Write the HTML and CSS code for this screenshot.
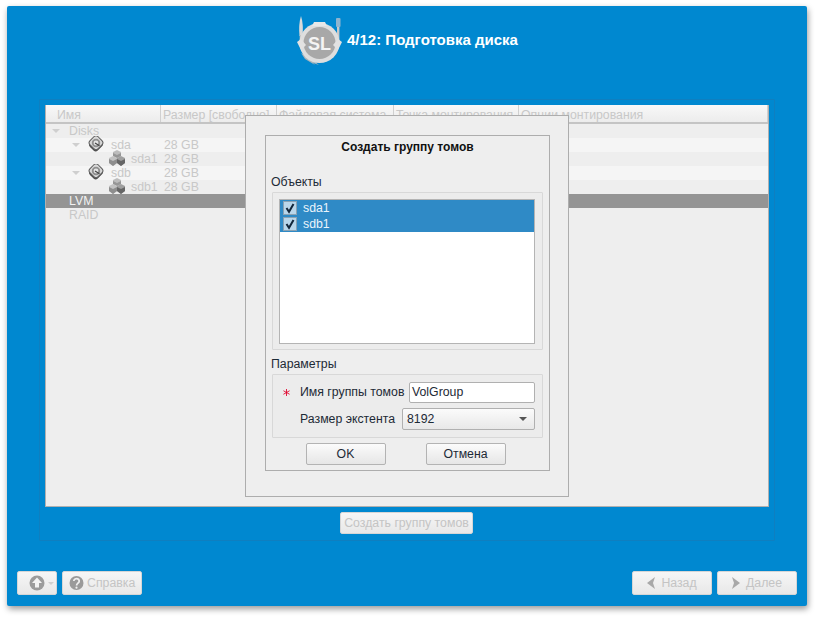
FILE: index.html
```html
<!DOCTYPE html>
<html lang="ru">
<head>
<meta charset="utf-8">
<title>Подготовка диска</title>
<link rel="stylesheet" href="styles.css">
</head>
<body>
<svg class="defs" width="0" height="0" aria-hidden="true">
  <defs>
    <symbol id="disk" viewBox="0 0 16 16">
      <rect x="2.500" y="2.500" width="11" height="12" rx="3" transform="rotate(45 8 8.500)" fill="#4f4f4f"/>
      <rect x="2.300" y="1" width="11.400" height="11.400" rx="3" transform="rotate(45 8 6.700)" fill="#d8d8d8" stroke="#5c5c5c" stroke-width="1"/>
      <circle cx="8" cy="7" r="4.200" fill="#8f8f8f"/>
      <circle cx="8" cy="7" r="2.400" fill="#e4e4e4"/>
      <path d="M7 7 11.500 9.800" stroke="#444" stroke-width="1.200"/>
    </symbol>
    <symbol id="cubes" viewBox="0 0 16 16">
      <path d="M8 0 12 2v4L8 8 4 6V2z" fill="#bcbcbc"/>
      <path d="M4 3l4 2 4-2v3L8 8 4 6z" fill="#969696"/>
      <path d="M4 6l4 2v5l-4 3-4-3V8z" fill="#c2c2c2"/>
      <path d="M0 9l4 2 4-2v4l-4 3-4-3z" fill="#8e8e8e"/>
      <path d="M12 6l4 2v5l-4 3-4-3V8z" fill="#a0a0a0"/>
      <path d="M8 9l4 2 4-2v4l-4 3-4-3z" fill="#666"/>
    </symbol>
    <symbol id="check" viewBox="0 0 14 14">
      <rect x=".5" y=".5" width="13" height="13" fill="#b9d6ea" stroke="#8aa2b3"/>
      <path d="M3.500 7 6 10.800 10.500 3" fill="none" stroke="#12263a" stroke-width="2"/>
    </symbol>
  </defs>
</svg>
<main class="window">
  <header class="head">
    <svg class="logo" width="48" height="52" viewBox="0 0 48 52" aria-hidden="true">
      <path d="M5 1C3 7 2.800 14 3.500 21H6.500C7.200 14 7 7 5 1z" fill="#dadada"/>
      <rect x="3.700" y="20" width="2.600" height="8" fill="#c4c4c4"/>
      <rect x="40" y="3" width="4.500" height="9" rx="1" fill="#8fb4cf"/>
      <rect x="41" y="12" width="2.400" height="16" fill="#c8c8c8"/>
      <path d="M5 38 15 44 23 50 17 48 19 50 9 44z" fill="#a9b4ba"/>
      <circle cx="23.500" cy="28" r="20" fill="#dedede"/>
      <circle cx="23.500" cy="28" r="16" fill="#a8a8a8"/>
      <path d="M1 27 5 24 10 30 5 35zM46 27 42 24 37 30 42 35z" fill="#e2e2e2"/>
      <path d="M18 7h11l2 4H16z" fill="#e8e8e8"/>
      <text class="logo-text" x="23.500" y="35" text-anchor="middle">SL</text>
    </svg>
    <h1 class="title">4/12: Подготовка диска</h1>
  </header>
  <section class="frame">
    <div class="tree">
      <div class="thead">
        <span class="th th-first">Имя</span>
        <span class="th">Размер [свободно]</span>
        <span class="th">Файловая система</span>
        <span class="th">Точка монтирования</span>
        <span class="th">Опции монтирования</span>
      </div>
      <div class="row">
        <span class="name lvl0"><i class="arrow"></i>Disks</span>
      </div>
      <div class="row alt">
        <span class="name lvl1"><i class="arrow"></i><svg class="ico" width="16" height="16"><use href="#disk"/></svg>sda</span><span class="size">28 GB</span>
      </div>
      <div class="row">
        <span class="name lvl2"><svg class="ico" width="16" height="16"><use href="#cubes"/></svg>sda1</span><span class="size">28 GB</span>
      </div>
      <div class="row alt">
        <span class="name lvl1"><i class="arrow"></i><svg class="ico" width="16" height="16"><use href="#disk"/></svg>sdb</span><span class="size">28 GB</span>
      </div>
      <div class="row">
        <span class="name lvl2"><svg class="ico" width="16" height="16"><use href="#cubes"/></svg>sdb1</span><span class="size">28 GB</span>
      </div>
      <div class="row selected"><span class="name lvl0b">LVM</span></div>
      <div class="row"><span class="name lvl0b">RAID</span></div>
    </div>
    <div class="actions">
      <button class="btn dim create">Создать группу томов</button>
    </div>
  </section>
  <footer class="foot">
    <div class="foot-group">
      <button class="btn dim up" aria-label="Меню">
        <svg width="16" height="16" viewBox="0 0 16 16" aria-hidden="true"><circle cx="8" cy="8" r="7.500" fill="#9c9c9c"/><path d="M8 2.500 13 8h-3v4.500H6V8H3z" fill="#f4f4f4"/></svg>
        <i class="mini-arrow"></i>
      </button>
      <button class="btn dim help">
        <svg width="15" height="16" viewBox="0 0 15 16" aria-hidden="true"><circle cx="7.500" cy="8" r="7" fill="#9a9a9a"/><path d="M4.800 6a2.700 2.400 0 1 1 4.300 2C8 8.800 7.600 9 7.600 10.500" fill="none" stroke="#efefef" stroke-width="1.800"/><circle cx="7.500" cy="12.700" r="1.100" fill="#efefef"/></svg>
        Справка
      </button>
    </div>
    <div class="foot-group">
      <button class="btn dim nav">
        <svg width="8" height="12" viewBox="0 0 8 12" aria-hidden="true"><path d="M8 0 0 6l8 6-2-6z" fill="#a8a8a8"/></svg>
        Назад
      </button>
      <button class="btn dim nav">
        <svg width="8" height="12" viewBox="0 0 8 12" aria-hidden="true"><path d="M0 0 8 6l-8 6 2-6z" fill="#a8a8a8"/></svg>
        Далее
      </button>
    </div>
  </footer>
  <div class="overlay">
    <div class="dialog">
      <h2 class="dlg-title">Создать группу томов</h2>
      <div class="group-label objects">Объекты</div>
      <div class="group">
        <div class="list">
          <div class="item"><svg width="14" height="14"><use href="#check"/></svg>sda1</div>
          <div class="item"><svg width="14" height="14"><use href="#check"/></svg>sdb1</div>
        </div>
      </div>
      <div class="group-label params">Параметры</div>
      <div class="group form">
        <div class="field">
          <span class="star"><svg width="7" height="7" viewBox="0 0 8 8" aria-hidden="true"><path d="M4 0v8M.5 2l7 4M7.500 2l-7 4" stroke="#e0002a" stroke-width="1"/></svg></span>
          <label class="lbl">Имя группы томов</label>
          <span class="input">VolGroup</span>
        </div>
        <div class="field">
          <label class="lbl lbl-extent">Размер экстента</label>
          <span class="combo">8192<i class="combo-arrow"></i></span>
        </div>
      </div>
      <div class="dlg-buttons">
        <button class="btn dlg-btn">OK</button>
        <button class="btn dlg-btn">Отмена</button>
      </div>
    </div>
  </div>
</main>
</body>
</html>
```
FILE: styles.css
```css
* { box-sizing: border-box; }
html, body { margin: 0; padding: 0; background: #fff; }
body { width: 820px; height: 620px; overflow: hidden; font-family: "Liberation Sans", Arial, sans-serif; font-size: 12.3px; }
.defs { position: absolute; }
.window {
  position: relative;
  width: 800px;
  height: 600px;
  margin: 6px 0 0 7px;
  background: #0088d0;
  border-radius: 2px;
  box-shadow: 1px 3px 6px rgba(0, 0, 0, .4);
  display: flex;
  flex-direction: column;
  padding: 0 10px;
}
.head {
  height: 93px;
  display: flex;
  align-items: flex-start;
  padding: 9px 0 0 279px;
  gap: 3px;
}
.logo { flex: none; }
.title { margin: 16px 0 0; font-size: 15px; line-height: 18px; font-weight: bold; color: #fff; }
.frame {
  width: 736px;
  margin-left: 22px;
  height: 442px;
  border: 1px solid #0f7fc0;
  border-radius: 1px;
  padding: 5px;
  display: flex;
  flex-direction: column;
}
.tree {
  width: 724px;
  height: 402px;
  background: #eeeeee;
  border-right: 1px solid #b0b0b0;
  border-bottom: 1px solid #b0b0b0;
  border-left: 1px solid #b0b0b0;
  color: #c8c8c8;
}
.thead {
  display: grid;
  grid-template-columns: 115px 116px 117px 125px 1fr;
  height: 19px;
  border-bottom: 2px solid #c4c4c4;
  background: linear-gradient(#f8f8f8, #ececec);
}
.th { padding: 3px 0 0 2px; line-height: 15px; border-right: 1px solid #d0d0d0; white-space: nowrap; overflow: hidden; }
.th-first { padding-left: 11px; }
.row { display: grid; grid-template-columns: 118px 1fr; height: 14px; line-height: 14px; }
.alt { background: #f5f5f5; }
.selected { background: #949494; color: #f2f2f2; }
.name { display: flex; align-items: center; white-space: nowrap; }
.lvl0 { padding-left: 6px; }
.lvl0 .arrow { margin-right: 9px; }
.lvl0b { padding-left: 23px; }
.lvl1 { padding-left: 26px; }
.lvl1 .arrow { margin-right: 8px; }
.lvl1 .ico { margin-right: 7px; }
.lvl2 { padding-left: 63px; }
.lvl2 .ico { margin-right: 6px; }
.ico { flex: none; margin-top: -2px; }
.arrow { flex: none; width: 0; height: 0; border: 4px solid transparent; border-top: 4px solid #cfcfcf; border-bottom: 0; }
.actions { display: flex; justify-content: center; padding: 5px 1px 0 0; }
.btn {
  font: 12.3px "Liberation Sans", Arial, sans-serif;
  border: 1px solid #b3b3b3;
  border-radius: 2px;
  background: linear-gradient(#fbfbfb, #e6e6e6);
  color: #1d2a36;
  padding: 0;
}
.dim { color: #c4c4c4; border-color: #d6d6d6; background: linear-gradient(#f6f6f6, #e8e8e8); }
.create { width: 133px; height: 22px; }
.foot {
  display: flex;
  justify-content: space-between;
  margin-top: 30px;
  height: 25px;
}
.foot-group { display: flex; gap: 5px; }
.foot-group .btn { height: 24px; display: flex; align-items: center; justify-content: center; }
.foot-group .up, .foot-group .help { justify-content: flex-start; }
.up { width: 40px; gap: 3px; padding-left: 11px; }
.mini-arrow { width: 0; height: 0; border: 3px solid transparent; border-top: 3px solid #d0d0d0; border-bottom: 0; }
.help { width: 80px; gap: 3px; padding-left: 6px; }
.nav { width: 80px; gap: 6px; }
.overlay {
  position: absolute;
  left: 238px;
  top: 109px;
  width: 324px;
  height: 382px;
  background: #eeeeee;
  border: 1px solid #adadad;
  padding: 19px;
}
.dialog {
  width: 285px;
  height: 336px;
  border: 1px solid #adadad;
  padding: 0 7px 0 5px;
  color: #1d2a36;
}
.dlg-title { margin: 0 0 0 2px; font-size: 12px; font-weight: bold; line-height: 14px; text-align: center; padding-top: 4px; color: #111; }
.group-label { line-height: 14px; }
.objects { margin-top: 21px; }
.params { margin-top: 7px; }
.group { border: 1px solid #d8d8d8; background: #ececec; border-radius: 1px; width: 271px; height: 158px; padding: 6px; margin: 3px 0 0 1px; }
.list { width: 256px; height: 145px; background: #fff; border: 1px solid #b4b4b4; }
.item { display: flex; align-items: center; gap: 6px; height: 16px; padding-left: 3px; background: #2f8ac6; color: #eaf4fb; }
.form { height: 64px; padding: 6px 7px 0 0; }
.field { display: flex; align-items: center; height: 22px; margin-bottom: 5px; white-space: nowrap; }
.star { width: 27px; padding-left: 10px; display: flex; align-items: center; }
.lbl { color: #1d2a36; }
.lbl-extent { margin-left: 27px; }
.input { margin-left: auto; width: 126px; height: 21px; background: #fff; border: 1px solid #b0b0b0; border-radius: 2px; padding-left: 2px; line-height: 19px; color: #1d2a36; }
.combo { margin-left: auto; width: 133px; height: 22px; border: 1px solid #b0b0b0; border-radius: 2px; background: linear-gradient(#fbfbfb, #e8e8e8); padding-left: 4px; line-height: 20px; display: flex; justify-content: space-between; align-items: center; padding-right: 7px; }
.combo-arrow { width: 0; height: 0; border: 4px solid transparent; border-top: 4px solid #555; border-bottom: 0; }
.dlg-buttons { display: flex; justify-content: center; gap: 40px; margin: 5px 2px 0 0; }
.dlg-btn { width: 80px; height: 22px; }
.logo-text { font: bold 18px "Liberation Sans", Arial, sans-serif; fill: #f4f4f4; }
```
